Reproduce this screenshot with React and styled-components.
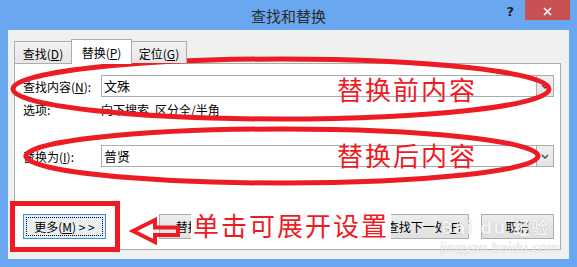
import React from "react";
import styled, { createGlobalStyle } from "styled-components";

const UI = `"Noto Sans CJK SC", "Microsoft YaHei", sans-serif`;
const RED = "#ed1c24";

const Global = createGlobalStyle`
  html, body { margin: 0; padding: 0; background: #fff; }
  body { font-family: ${UI}; }
  * { box-sizing: border-box; }
`;

const Window = styled.div`
  position: relative;
  width: 577px;
  height: 267px;
  background: #69a8f0;
  display: flex;
  flex-direction: column;
  overflow: hidden;
`;

const TitleBar = styled.div`
  height: 30px;
  flex-shrink: 0;
  display: grid;
  grid-template-columns: 1fr auto 1fr;
`;

const Title = styled.div`
  grid-column: 2;
  font-size: 15px;
  line-height: 31px;
  color: #2b2b2b;
`;

const Controls = styled.div`
  grid-column: 3;
  display: flex;
  justify-content: flex-end;
  align-items: flex-start;
  padding-right: 7px;
`;

const Help = styled.span`
  font: bold 13px "DejaVu Sans", sans-serif;
  line-height: 14px;
  color: #222;
  margin-top: 5px;
  margin-right: 11px;
`;

const Close = styled.div`
  width: 45px;
  height: 20px;
  background: #c75050;
  display: flex;
  align-items: center;
  justify-content: center;
  padding-top: 2px;
`;

const Client = styled.div`
  flex: 1;
  margin: 0 8px 8px 8px;
  background: #f0f0f0;
  padding: 9px 8px 9px 6px;
  display: flex;
  flex-direction: column;
`;

const TabRow = styled.div`
  display: flex;
  align-items: flex-end;
  height: 24px;
  position: relative;
  z-index: 1;
`;

const Tab = styled.div`
  position: relative;
  z-index: ${(p) => (p.$active ? 2 : 1)};
  width: ${(p) => p.$w}px;
  height: ${(p) => (p.$active ? 25 : 22)}px;
  margin-bottom: ${(p) => (p.$active ? -1 : 0)}px;
  margin-left: ${(p) => (p.$first ? 0 : -1)}px;
  border: 1px solid #acacac;
  border-bottom: none;
  background: ${(p) => (p.$active ? "#fff" : "linear-gradient(#f2f2f2, #e6e6e6)")};
  display: flex;
  align-items: center;
  justify-content: center;
  padding-top: ${(p) => (p.$active ? 0 : 1)}px;
  font-size: 12px;
  color: #000;
`;

const U = styled.span`
  text-decoration: underline;
  text-underline-offset: 1px;
`;

const Panel = styled.div`
  height: 187px;
  border: 1px solid #acacac;
  background: #fff;
  padding: 11px 6px 0 8px;
  display: flex;
  flex-direction: column;
`;

const FieldRow = styled.div`
  display: grid;
  grid-template-columns: 78px 1fr;
  align-items: center;
  height: ${(p) => p.$h || 22}px;
  margin-top: ${(p) => p.$mt || 0}px;
  font-size: 12px;
  color: #000;
`;

const Combo = styled.div`
  height: 22px;
  border: 1px solid #abadb3;
  display: flex;
  align-items: stretch;
  background: #fff;
`;

const ComboValue = styled.div`
  flex: 1;
  padding-left: 2px;
  font-size: 13px;
  line-height: 20px;
  color: #000;
`;

const DropBtn = styled.div`
  width: 18px;
  margin: -1px -1px -1px 0;
  border: 1px solid #acacac;
  background: linear-gradient(#f0f0f0, #e3e3e3);
  display: flex;
  align-items: center;
  justify-content: center;
`;

const ButtonRow = styled.div`
  display: flex;
  align-items: center;
  margin-top: 47px;
  height: 25px;
`;

const ButtonGroup = styled.div`
  display: flex;
  gap: 12px;
  margin-left: auto;
`;

const Button = styled.div`
  width: ${(p) => p.$w}px;
  height: 25px;
  border: 1px solid ${(p) => (p.$focus ? "#3b8fe6" : "#adadad")};
  background: ${(p) => (p.$focus ? "#e9eef3" : "linear-gradient(#ececec, #e1e1e1)")};
  display: flex;
  align-items: center;
  justify-content: center;
  font-size: 12px;
  color: #000;
  padding: 2px;
  white-space: nowrap;
`;

const FocusRing = styled.div`
  width: 100%;
  height: 100%;
  border: 1px dotted #000;
  display: flex;
  align-items: center;
  justify-content: center;
  white-space: pre;
`;

const Overlay = styled.div`
  position: absolute;
  inset: 0;
  pointer-events: none;
`;

const Marks = styled.svg`
  position: absolute;
  left: 0;
  top: 0;
`;

const Note = styled.div`
  position: absolute;
  left: ${(p) => p.$x}px;
  top: ${(p) => p.$y}px;
  font-family: ${UI};
  font-size: 26px;
  line-height: 26px;
  letter-spacing: 2px;
  color: ${RED};
  white-space: nowrap;
  background: ${(p) => (p.$boxed ? "#fff" : "transparent")};
  padding: ${(p) => (p.$boxed ? "5px 0 6px 2px" : "0")};
  width: ${(p) => (p.$boxed ? "200px" : "auto")};
`;

const Watermark = styled.div`
  position: absolute;
  left: ${(p) => p.$x}px;
  top: ${(p) => p.$y}px;
  font-family: "DejaVu Sans", ${UI};
  font-size: ${(p) => p.$size}px;
  font-weight: ${(p) => p.$weight || 400};
  letter-spacing: ${(p) => p.$ls || 0}px;
  line-height: 1;
  color: rgba(255, 255, 255, 0.85);
  text-shadow: 0 0 1px rgba(120, 120, 120, 0.3), 0 0 1px rgba(120, 120, 120, 0.3);
  white-space: nowrap;
`;

function Chevron() {
  return (
    <svg width="8" height="5" viewBox="0 0 8 5">
      <path d="M1 1 L4 4 L7 1" fill="none" stroke="#444" strokeWidth="1.4" />
    </svg>
  );
}

export default function App() {
  return (
    <>
      <Global />
      <Window>
        <TitleBar>
          <Title>查找和替换</Title>
          <Controls>
            <Help>?</Help>
            <Close>
              <svg width="9" height="9" viewBox="0 0 9 9">
                <path d="M1 1 L8 8 M8 1 L1 8" stroke="#fff" strokeWidth="1.6" />
              </svg>
            </Close>
          </Controls>
        </TitleBar>
        <Client>
          <TabRow>
            <Tab $w={58} $first>
              查找(<U>D</U>)
            </Tab>
            <Tab $w={61} $active>
              替换(<U>P</U>)
            </Tab>
            <Tab $w={56}>
              定位(<U>G</U>)
            </Tab>
          </TabRow>
          <Panel>
            <FieldRow>
              <span>
                查找内容(<U>N</U>):
              </span>
              <Combo>
                <ComboValue>文殊</ComboValue>
                <DropBtn>
                  <Chevron />
                </DropBtn>
              </Combo>
            </FieldRow>
            <FieldRow $h={16} $mt={4}>
              <span>选项:</span>
              <span>向下搜索, 区分全/半角</span>
            </FieldRow>
            <FieldRow $mt={28}>
              <span>
                替换为(<U>I</U>):
              </span>
              <Combo>
                <ComboValue>普贤</ComboValue>
                <DropBtn>
                  <Chevron />
                </DropBtn>
              </Combo>
            </FieldRow>
            <ButtonRow>
              <Button $w={83} $focus>
                <FocusRing>
                  更多(<U>M</U>) {"> >"}
                </FocusRing>
              </Button>
              <ButtonGroup>
                <Button $w={73}>
                  替换(<U>R</U>)
                </Button>
                <Button $w={123}>
                  全部替换(<U>A</U>)
                </Button>
                <Button $w={90}>
                  查找下一处(<U>F</U>)
                </Button>
                <Button $w={73}>取消</Button>
              </ButtonGroup>
            </ButtonRow>
          </Panel>
        </Client>

        <Overlay>
          <Watermark $x={440} $y={220} $size={17} $weight={700} $ls={1}>
            Bai du 经验
          </Watermark>
          <Watermark $x={440} $y={241} $size={13}>
            jingyan.baidu.com
          </Watermark>
          <Marks width="577" height="267" viewBox="0 0 577 267">
            <g fill="none" stroke={RED}>
              <ellipse cx="281" cy="89" rx="268" ry="30" strokeWidth="5" />
              <ellipse cx="282" cy="156" rx="256" ry="27" strokeWidth="5" />
              <rect x="12.5" y="203.5" width="105" height="46" strokeWidth="5" />
              <polygon
                points="133,231 155,220 155,227.5 178,227.5 178,235 155,235 155,242"
                strokeWidth="4"
                strokeLinejoin="miter"
              />
            </g>
          </Marks>
          <Note $x={337} $y={76}>替换前内容</Note>
          <Note $x={337} $y={142}>替换后内容</Note>
          <Note $x={191} $y={207} $boxed>
            单击可展开设置
          </Note>
        </Overlay>
      </Window>
    </>
  );
}
